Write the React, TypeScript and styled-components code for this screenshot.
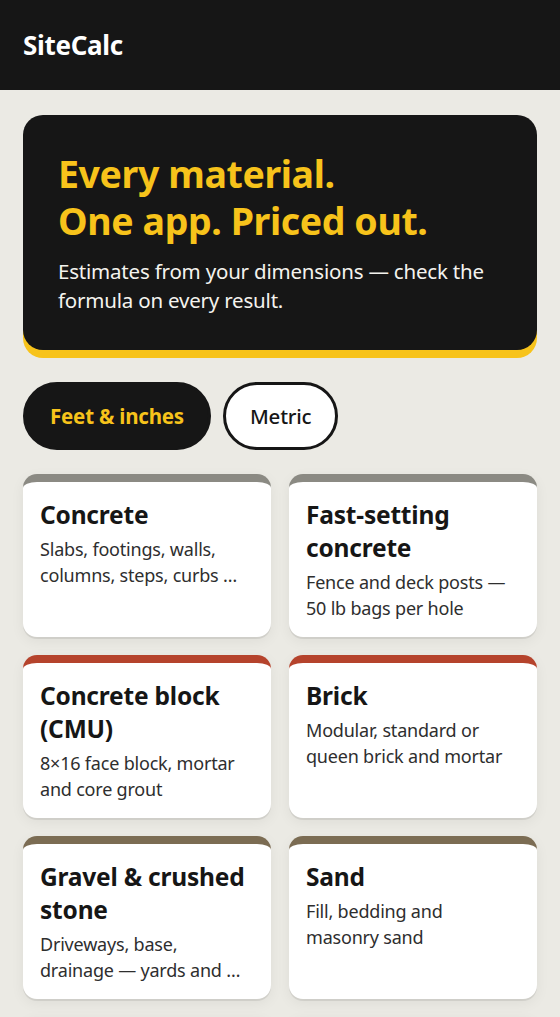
import React, { useState } from "react";
import styled, { createGlobalStyle } from "styled-components";

const Global = createGlobalStyle`
  html, body { margin: 0; padding: 0; }
  body {
    background: #ebeae4;
    font-family: "Noto Sans", "Open Sans", sans-serif;
    color: #161616;
  }
  * { box-sizing: border-box; }
`;

const Header = styled.header`
  height: 90px;
  background: #161616;
  display: flex;
  align-items: center;
  padding: 0 23px;
`;

const Logo = styled.div`
  color: #ffffff;
  font-weight: 700;
  font-size: 26px;
  letter-spacing: -0.3px;
`;

const Main = styled.main`
  padding: 25px 23px 0;
  display: flex;
  flex-direction: column;
`;

const Hero = styled.section`
  background: #161616;
  border-radius: 20px;
  box-shadow: 0 8px 0 #f7c31b;
  padding: 35px 35px 35px;
`;

const Headline = styled.h1`
  margin: 0;
  color: #f7c31b;
  font-size: 37.5px;
  line-height: 47px;
  font-weight: 700;
  letter-spacing: -0.4px;
`;

const Lede = styled.p`
  margin: 13px 0 0;
  color: #f4f3ee;
  font-size: 20.5px;
  line-height: 29px;
  letter-spacing: -0.2px;
`;

const Toggle = styled.div`
  display: flex;
  gap: 12px;
  margin-top: 32px;
`;

const Pill = styled.button<{ $active: boolean }>`
  height: 68px;
  border-radius: 34px;
  padding: 0 24px;
  font-family: inherit;
  font-size: 20.5px;
  letter-spacing: -0.2px;
  cursor: pointer;
  background: ${(p) => (p.$active ? "#161616" : "#ffffff")};
  color: ${(p) => (p.$active ? "#f7c31b" : "#161616")};
  font-weight: ${(p) => (p.$active ? 700 : 500)};
  border: 3px solid #161616;
`;

const Grid = styled.div`
  display: grid;
  grid-template-columns: 1fr 1fr;
  gap: 18px;
  margin-top: 24px;
`;

const Card = styled.article<{ $accent: string }>`
  height: 163px;
  background: #ffffff;
  border-radius: 14px;
  border-top: 8px solid ${(p) => p.$accent};
  box-shadow: 0 2px 0 rgba(0, 0, 0, 0.08), 0 4px 14px rgba(0, 0, 0, 0.06);
  padding: 16px 24px 0 17px;
  overflow: hidden;
`;

const CardTitle = styled.h2`
  margin: 0;
  font-size: 24.5px;
  line-height: 33px;
  font-weight: 700;
  letter-spacing: -0.2px;
`;

const CardText = styled.p`
  margin: 5px 0 0;
  font-size: 18px;
  line-height: 26px;
  color: #2e2e2e;
  letter-spacing: -0.2px;
  display: -webkit-box;
  -webkit-line-clamp: 2;
  -webkit-box-orient: vertical;
  overflow: hidden;
`;

const materials = [
  { t: "Concrete", d: "Slabs, footings, walls, columns, steps, curbs …", c: "#8b8a83" },
  { t: "Fast-setting concrete", d: "Fence and deck posts — 50 lb bags per hole", c: "#8b8a83" },
  { t: "Concrete block (CMU)", d: "8×16 face block, mortar and core grout", c: "#b5432c" },
  { t: "Brick", d: "Modular, standard or queen brick and mortar", c: "#b5432c" },
  { t: "Gravel & crushed stone", d: "Driveways, base, drainage — yards and …", c: "#7b6c53" },
  { t: "Sand", d: "Fill, bedding and masonry sand", c: "#7b6c53" },
  { t: "Topsoil", d: "Garden beds and lawns", c: "#8faa7c" },
  { t: "Mulch", d: "Beds and paths", c: "#8faa7c" },
];

export default function App() {
  const [unit, setUnit] = useState("imperial");
  return (
    <>
      <Global />
      <Header>
        <Logo>SiteCalc</Logo>
      </Header>
      <Main>
        <Hero>
          <Headline>
            Every material.
            <br />
            One app. Priced out.
          </Headline>
          <Lede>Estimates from your dimensions — check the formula on every result.</Lede>
        </Hero>
        <Toggle>
          <Pill $active={unit === "imperial"} onClick={() => setUnit("imperial")}>
            Feet &amp; inches
          </Pill>
          <Pill $active={unit === "metric"} onClick={() => setUnit("metric")}>
            Metric
          </Pill>
        </Toggle>
        <Grid>
          {materials.map((m) => (
            <Card key={m.t} $accent={m.c}>
              <CardTitle>{m.t}</CardTitle>
              <CardText>{m.d}</CardText>
            </Card>
          ))}
        </Grid>
      </Main>
    </>
  );
}
